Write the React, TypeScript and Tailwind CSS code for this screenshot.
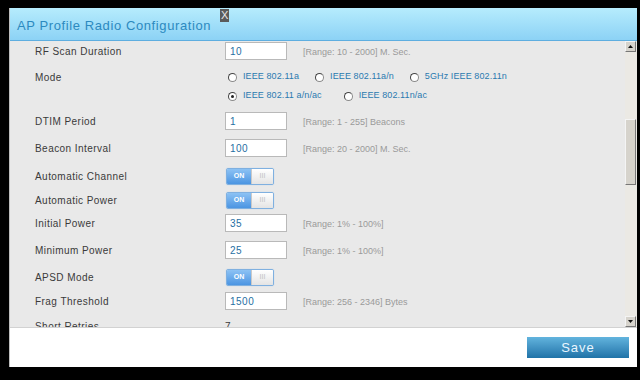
import React from "react"

const font = { fontFamily: '"Liberation Sans", Arial, sans-serif' }

function Row({ label, top, children }: { label: string; top: string; children?: React.ReactNode }) {
  return (
    <div className={`flex items-center h-[18px] ${top}`}>
      <div className="w-[190px] shrink-0 text-[10px] tracking-[0.45px] text-[#3a3a3a]">{label}</div>
      {children}
    </div>
  )
}

function Field({ value, hint }: { value: string; hint: string }) {
  return (
    <>
      <div className="w-[62px] h-[18px] bg-white border border-[#b9b9b9] flex items-center pl-[4px] text-[10px] tracking-[0.5px] text-[#1f6fa3]">
        {value}
      </div>
      <div className="ml-[16px] mt-[3px] text-[9px] text-[#9a9a9a]">{hint}</div>
    </>
  )
}

function Toggle() {
  return (
    <div className="flex w-[48px] h-[17px] ml-[1px] rounded-[2px] border border-[#7fb0e0] overflow-hidden shadow-[0_0_1px_#9cc4ea]">
      <div className="w-[24px] bg-gradient-to-b from-[#8cc2f4] to-[#4b95e2] flex items-center justify-center text-[7px] font-bold text-white">
        ON
      </div>
      <div className="flex-1 bg-gradient-to-b from-[#ffffff] to-[#e4e4e4] border-l border-[#c9c9c9] flex items-center justify-center text-[7px] text-[#c0c0c0]">
        III
      </div>
    </div>
  )
}

function Radio({ label, checked }: { label: string; checked?: boolean }) {
  return (
    <div className="flex items-center">
      <span className="w-[9px] h-[9px] rounded-full bg-white border border-[#8a8a8a] border-t-[#444] border-l-[#444] flex items-center justify-center">
        {checked && <span className="w-[3px] h-[3px] rounded-full bg-[#222]" />}
      </span>
      <span className="ml-[6px] text-[9px] tracking-[0.1px] text-[#2a7ab0]">{label}</span>
    </div>
  )
}

function ScrollBtn({ up }: { up?: boolean }) {
  return (
    <div className="w-[11px] h-[11px] bg-[#d6d3cc] border border-[#f4f4f4] border-r-[#777] border-b-[#777] flex items-center justify-center">
      <svg width="5" height="3" viewBox="0 0 5 3">
        <path d={up ? "M2.5 0 L5 3 L0 3 Z" : "M0 0 L5 0 L2.5 3 Z"} fill="#111" />
      </svg>
    </div>
  )
}

export default function App() {
  return (
    <div className="w-[640px] h-[380px] bg-black pt-[8px] pl-[9px]" style={font}>
      <div className="w-[628px] h-[359px] flex flex-col border-l border-[#bdbdbd]">
        {/* header */}
        <div className="h-[33px] shrink-0 bg-gradient-to-b from-[#b6ecfd] to-[#8cd2f5] border-b border-[#5eaee0] flex items-start">
          <div className="ml-[7px] mt-[8px] text-[13px] tracking-[0.6px] text-[#2c8ac0]">AP Profile Radio Configuration</div>
          <div className="ml-[9px] mt-[1px] w-[9px] h-[13px] bg-[#5b5b5b] flex items-center justify-center text-[11px] leading-none text-[#e8e8e8]">
            X
          </div>
        </div>

        {/* body */}
        <div className="h-[287px] shrink-0 flex bg-[#e9e9e9] border-b border-[#d2d2d2]">
          <div className="flex-1 overflow-hidden pl-[25px]">
            <Row label="RF Scan Duration" top="mt-[1px]">
              <Field value="10" hint="[Range: 10 - 2000] M. Sec." />
            </Row>
            <div className="flex mt-[8px]">
              <div className="w-[190px] h-[18px] flex items-center shrink-0 text-[10px] tracking-[0.45px] text-[#3a3a3a]">Mode</div>
              <div className="flex flex-col">
                <div className="flex items-center h-[18px] pl-[3px] gap-[16px]">
                  <Radio label="IEEE 802.11a" />
                  <Radio label="IEEE 802.11a/n" />
                  <Radio label="5GHz IEEE 802.11n" />
                </div>
                <div className="flex items-center h-[18px] mt-[1px] pl-[3px] gap-[22px]">
                  <Radio label="IEEE 802.11 a/n/ac" checked />
                  <Radio label="IEEE 802.11n/ac" />
                </div>
              </div>
            </div>
            <Row label="DTIM Period" top="mt-[7px]">
              <Field value="1" hint="[Range: 1 - 255] Beacons" />
            </Row>
            <Row label="Beacon Interval" top="mt-[9px]">
              <Field value="100" hint="[Range: 20 - 2000] M. Sec." />
            </Row>
            <Row label="Automatic Channel" top="mt-[10px]">
              <Toggle />
            </Row>
            <Row label="Automatic Power" top="mt-[6px]">
              <Toggle />
            </Row>
            <Row label="Initial Power" top="mt-[5px]">
              <Field value="35" hint="[Range: 1% - 100%]" />
            </Row>
            <Row label="Minimum Power" top="mt-[9px]">
              <Field value="25" hint="[Range: 1% - 100%]" />
            </Row>
            <Row label="APSD Mode" top="mt-[9px]">
              <Toggle />
            </Row>
            <Row label="Frag Threshold" top="mt-[6px]">
              <Field value="1500" hint="[Range: 256 - 2346] Bytes" />
            </Row>
            <Row label="Short Retries" top="mt-[7px]">
              <div className="text-[10px] text-[#3a3a3a]">7</div>
            </Row>
          </div>

          {/* scrollbar */}
          <div className="w-[12px] shrink-0 flex flex-col bg-[#ebe9e4] bg-[radial-gradient(#d9d6cf_0.6px,transparent_0.7px)] bg-[length:2px_2px]">
            <ScrollBtn up />
            <div className="mt-[67px] h-[66px] w-[11px] bg-[#d6d3cc] border border-[#f4f4f4] border-r-[#777] border-b-[#777]" />
            <div className="flex-1" />
            <ScrollBtn />
          </div>
        </div>

        {/* footer */}
        <div className="flex-1 bg-white flex justify-end items-start pr-[8px] pt-[9px]">
          <button className="w-[102px] h-[21px] bg-gradient-to-b from-[#62b4de] to-[#1f73a8] text-[13px] tracking-[1px] text-[#eaf6ff]">
            Save
          </button>
        </div>
      </div>
    </div>
  )
}
